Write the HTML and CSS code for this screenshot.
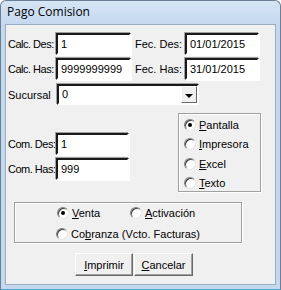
FILE: index.html
```html
<!DOCTYPE html>
<html>
<head>
<meta charset="utf-8">
<link rel="stylesheet" href="styles.css">
</head>
<body>
<div class="window">
  <div class="titlebar">Pago Comision</div>
  <div class="client">
    <div class="row row1">
      <span class="lbl lbl-a">Calc. Des:</span>
      <div class="field f75">1</div>
      <span class="lbl lbl-b">Fec. Des:</span>
      <div class="field f74">01/01/2015</div>
    </div>
    <div class="row row2">
      <span class="lbl lbl-a">Calc. Has:</span>
      <div class="field f75">9999999999</div>
      <span class="lbl lbl-b">Fec. Has:</span>
      <div class="field f74">31/01/2015</div>
    </div>
    <div class="row row3">
      <span class="lbl lbl-c">Sucursal</span>
      <div class="combo">
        <span class="combo-text">0</span>
        <span class="combo-btn"><span class="arrow"></span></span>
      </div>
    </div>
    <div class="middle">
      <div class="leftcol">
        <div class="row">
          <span class="lbl lbl-a">Com. Des:</span>
          <div class="field f73">1</div>
        </div>
        <div class="row row2">
          <span class="lbl lbl-a">Com. Has:</span>
          <div class="field f73">999</div>
        </div>
      </div>
      <div class="group outbox">
        <div class="opt"><span class="radio on"></span><span><u>P</u>antalla</span></div>
        <div class="opt"><span class="radio"></span><span><u>I</u>mpresora</span></div>
        <div class="opt"><span class="radio"></span><span><u>E</u>xcel</span></div>
        <div class="opt"><span class="radio"></span><span><u>T</u>exto</span></div>
      </div>
    </div>
    <div class="group typebox">
      <div class="trow">
        <div class="opt venta"><span class="radio on"></span><span><u>V</u>enta</span></div>
        <div class="opt"><span class="radio"></span><span><u>A</u>ctivación</span></div>
      </div>
      <div class="trow trow2">
        <div class="opt"><span class="radio"></span><span>Co<u>b</u>ranza (Vcto. Facturas)</span></div>
      </div>
    </div>
    <div class="buttons">
      <button class="btn b1"><u>I</u>mprimir</button>
      <button class="btn b2"><u>C</u>ancelar</button>
    </div>
  </div>
</div>
</body>
</html>
```

FILE: styles.css
```css
html, body {
  margin: 0;
  padding: 0;
  background: #ffffff;
}

.window {
  width: 281px;
  height: 290px;
  box-sizing: border-box;
  background: #c4d8ee;
  border: 1px solid #6d7f94;
  border-bottom-color: #4aa8d6;
  border-radius: 6px 6px 0 0;
  padding: 0 4px 4px 4px;
  display: flex;
  flex-direction: column;
  font-family: "Liberation Sans", Arial, sans-serif;
  font-size: 11px;
  color: #000;
}

.titlebar {
  height: 23px;
  box-sizing: border-box;
  padding: 3px 0 0 6px;
  font-family: "Open Sans", "Noto Sans", sans-serif;
  font-size: 12px;
  line-height: 16px;
  color: #000;
  background: linear-gradient(#d6e5f5, #c4d8ee);
  margin: 0 -4px;
  border-radius: 6px 6px 0 0;
}

.client {
  flex: 1;
  background: #f0f0f0;
  border: 1px solid #9aacc2;
  padding: 8px 0 0 2px;
  display: flex;
  flex-direction: column;
}

.row {
  display: flex;
  align-items: center;
}

.row2 {
  margin-top: 3px;
}

.row3 {
  margin-top: 4px;
}

.lbl {
  white-space: nowrap;
  flex: none;
}

.lbl-a {
  width: 48px;
  letter-spacing: -0.5px;
}

.lbl-b {
  width: 50px;
  margin-left: 4px;
}

.lbl-c {
  width: 49px;
}

.field {
  flex: none;
  height: 22px;
  box-sizing: border-box;
  background: #fff;
  border: 2px solid;
  border-color: #1a1a1a #ffffff #ffffff #1a1a1a;
  box-shadow: -1px -1px 0 #a0a0a0, 1px 1px 0 #ffffff;
  padding-left: 3px;
  line-height: 18px;
  white-space: nowrap;
}

.f75 { width: 75px; }
.f74 { width: 74px; }
.f73 { width: 73px; }

.combo {
  width: 142px;
  height: 21px;
  box-sizing: border-box;
  background: #fff;
  border: 2px solid;
  border-color: #1a1a1a #ffffff #ffffff #1a1a1a;
  box-shadow: -1px -1px 0 #a0a0a0;
  display: flex;
  align-items: stretch;
}

.combo-text {
  flex: 1;
  padding-left: 3px;
  line-height: 17px;
}

.combo-btn {
  width: 16px;
  box-sizing: border-box;
  background: #f0f0f0;
  border: 1px solid;
  border-color: #ffffff #696969 #696969 #ffffff;
  display: flex;
  align-items: center;
  justify-content: center;
}

.arrow {
  width: 0;
  height: 0;
  border-left: 4px solid transparent;
  border-right: 4px solid transparent;
  border-top: 4px solid #000;
  margin-top: 2px;
}

.middle {
  display: flex;
  margin-top: 8px;
}

.leftcol {
  padding-top: 20px;
  width: 125px;
}

.group {
  box-sizing: border-box;
  border: 1px solid #a0a0a0;
  box-shadow: inset 1px 1px 0 #ffffff, 1px 1px 0 #ffffff;
}

.outbox {
  width: 83px;
  height: 79px;
  margin-left: 45px;
  padding-top: 1px;
}

.opt {
  display: flex;
  align-items: center;
  height: 19.5px;
  white-space: nowrap;
}

.outbox .opt {
  padding-left: 5px;
}

.radio {
  width: 12px;
  height: 12px;
  box-sizing: border-box;
  border-radius: 50%;
  background: #fff;
  border: 1px solid;
  border-color: #808080 #e6e6e6 #e6e6e6 #808080;
  box-shadow: inset 1px 1px 0 #404040;
  margin-right: 3px;
  display: flex;
  align-items: center;
  justify-content: center;
  flex: none;
}

.radio.on::after {
  content: "";
  width: 4px;
  height: 4px;
  border-radius: 50%;
  background: #000;
}

.typebox {
  width: 228px;
  height: 41px;
  margin-top: 10px;
  margin-left: 6px;
}

.trow {
  display: flex;
  padding-left: 42px;
  height: 20px;
  align-items: center;
}

.trow .venta {
  width: 73px;
}

.trow2 {
  padding-left: 41px;
  margin-top: 1px;
}

.buttons {
  display: flex;
  margin-top: 10px;
  padding-left: 67px;
}

.btn {
  height: 23px;
  box-sizing: border-box;
  font-family: "Liberation Sans", Arial, sans-serif;
  font-size: 11px;
  color: #000;
  background: #f0f0f0;
  border: 1px solid;
  border-color: #ffffff #696969 #696969 #ffffff;
  box-shadow: inset -1px -1px 0 #a0a0a0;
  padding: 0;
  margin: 0;
  border-radius: 0;
}

.b1 { width: 58px; }
.b2 { width: 59px; margin-left: 1px; }
```
